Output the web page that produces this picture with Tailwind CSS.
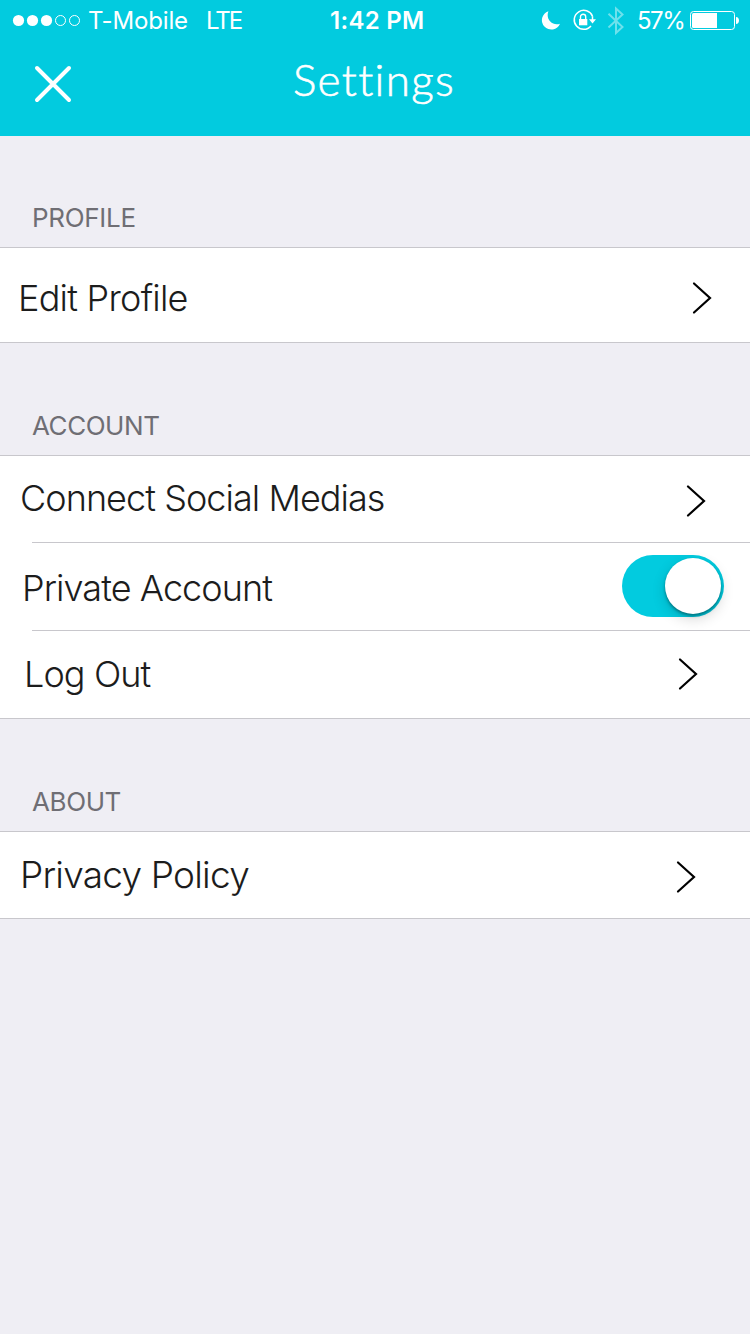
<!DOCTYPE html>
<html lang="en">
<head>
<meta charset="utf-8">
<title>Settings</title>
<script src="https://cdn.jsdelivr.net/npm/@tailwindcss/browser@4"></script>
</head>
<body class="bg-[#efeef4] font-['Inter',sans-serif] text-[#1c1c1c] w-[750px] h-[1334px] overflow-hidden">
<header class="h-[136px] bg-[#02cbdf] text-white">
  <div class="grid grid-cols-[330px_1fr_209px] h-[42px] leading-[42px] text-[24px] whitespace-nowrap">
    <div class="flex pl-[12px]">
      <svg class="w-[70px] h-[42px] shrink-0" viewBox="0 0 70 42" fill="none" stroke="#fff"><g fill="#fff" stroke="none"><circle cx="6.5" cy="20.5" r="5.6"/><circle cx="20.5" cy="20.5" r="5.6"/><circle cx="34.5" cy="20.5" r="5.6"/></g><circle cx="48.5" cy="20.5" r="5"/><circle cx="62.5" cy="20.5" r="5"/></svg>
      <span class="ml-[6px] w-[118px] tracking-[-0.15px]">T-Mobile</span>
      <span class="tracking-[-2px]">LTE</span>
    </div>
    <div class="font-semibold tracking-[0.3px]">1:42 PM</div>
    <div class="flex">
      <svg class="w-[96px] h-[42px] shrink-0" viewBox="541 0 96 42" fill="none">
        <path d="M548.4 11.2A9.4 9.4 0 1 0 560 23.7C552.500 26.500 545.300 19.200 548.400 11.200Z" fill="#fff"/>
        <path d="M592.500 16.200A9.500 9.500 0 1 0 591 26" stroke="#fff" stroke-width="1.500"/>
        <path d="M592.500 16.200V20" stroke="#fff" stroke-width="1.500"/>
        <path d="M589 19.300H596L592.500 23.500Z" fill="#fff"/>
        <path d="M579 19H587.300V25.300H579Z" fill="#fff"/><path d="M580.500 19.500V16.800A2.600 2.600 0 0 1 585.700 16.800V19.500" stroke="#fff" stroke-width="1.400"/>
        <path d="M608.500 13.700L622.500 27L616 33V8.500L622.500 14.500L608.500 27.500" stroke="#6ee1ec" stroke-width="2"/>
      </svg>
      <span class="w-[53px] tracking-[-1.5px]">57%</span>
      <svg class="w-[50px] h-[42px] shrink-0" viewBox="690 0 50 42" fill="none"><rect x="690.500" y="11.500" width="44" height="18" rx="3" stroke="#fff"/><path d="M693.500 13H717V28H693.500Q692 28 692 26.500V14.500Q692 13 693.500 13Z" fill="#fff"/><path d="M736 17C740 17 740 24 736 24Z" fill="#fff"/></svg>
    </div>
  </div>
  <div class="grid grid-cols-[293px_1fr] h-[94px]">
    <svg class="w-[106px] h-[84px]" viewBox="0 42 106 84" stroke="#fff" stroke-width="4" stroke-linecap="round"><path d="M37 68L69 100M69 68L37 100"/></svg>
    <h1 class="font-['Lato',sans-serif] font-light text-[44px] leading-[74px] tracking-[1.3px] [-webkit-text-stroke:0.6px_#fff]">Settings</h1>
  </div>
</header>
<main class="whitespace-nowrap font-light text-[36px]">
  <h2 class="h-[111px] pl-[32px] pt-[52px] text-[26px] leading-[60px] font-normal tracking-[-0.3px] text-[#6f6e74]">PROFILE</h2>
  <div class="flex justify-between h-[96px] border-y border-[#c8c7cc] bg-white pl-[18px]">
    <span class="leading-[100px] tracking-[-0.75px]">Edit Profile</span>
    <svg class="w-[64px] h-[94px]" viewBox="686 248 64 94" fill="none" stroke="#000" stroke-width="2.200" stroke-linecap="round"><path d="M694 283.500L710 298L694 312.500"/></svg>
  </div>
  <h2 class="h-[112px] pl-[32px] pt-[53px] text-[26px] leading-[60px] font-normal tracking-[-0.45px] text-[#6f6e74]">ACCOUNT</h2>
  <section class="h-[264px] border-y border-[#c8c7cc] bg-white">
    <div class="flex justify-between h-[86px] pl-[20px]">
      <span class="leading-[84px] tracking-[-0.95px]">Connect Social Medias</span>
      <svg class="w-[70px] h-[86px]" viewBox="680 456 70 86" fill="none" stroke="#000" stroke-width="2.200" stroke-linecap="round"><path d="M688 486.500L704 501L688 515.500"/></svg>
    </div>
    <div class="h-px ml-[32px] bg-[#c8c7cc]"></div>
    <div class="flex justify-between h-[87px] pl-[22px] pr-[26px]">
      <span class="leading-[91px] tracking-[-0.93px]">Private Account</span>
      <div class="mt-[12px] w-[102px] h-[62px] rounded-full bg-[#02cbdf] pl-[43px] pt-[3px]"><div class="size-[56px] rounded-full bg-white shadow-[0_5px_14px_rgba(0,0,0,0.16),0_2px_3px_rgba(0,0,0,0.35)]"></div></div>
    </div>
    <div class="h-px ml-[32px] bg-[#c8c7cc]"></div>
    <div class="flex justify-between h-[87px] pl-[24px]">
      <span class="leading-[87px] tracking-[-0.9px]">Log Out</span>
      <svg class="w-[80px] h-[87px]" viewBox="670 631 80 87" fill="none" stroke="#000" stroke-width="2.200" stroke-linecap="round"><path d="M680 659.500L696 674L680 688.500"/></svg>
    </div>
  </section>
  <h2 class="h-[112px] pl-[32px] pt-[53px] text-[26px] leading-[60px] font-normal tracking-[-0.4px] text-[#6f6e74]">ABOUT</h2>
  <div class="flex justify-between h-[88px] border-y border-[#c8c7cc] bg-white pl-[20px]">
    <span class="leading-[85px] text-[37px] tracking-[-0.78px]">Privacy Policy</span>
    <svg class="w-[80px] h-[86px]" viewBox="670 832 80 86" fill="none" stroke="#000" stroke-width="2.200" stroke-linecap="round"><path d="M678 862.500L694 877L678 891.500"/></svg>
  </div>
</main>
</body>
</html>
